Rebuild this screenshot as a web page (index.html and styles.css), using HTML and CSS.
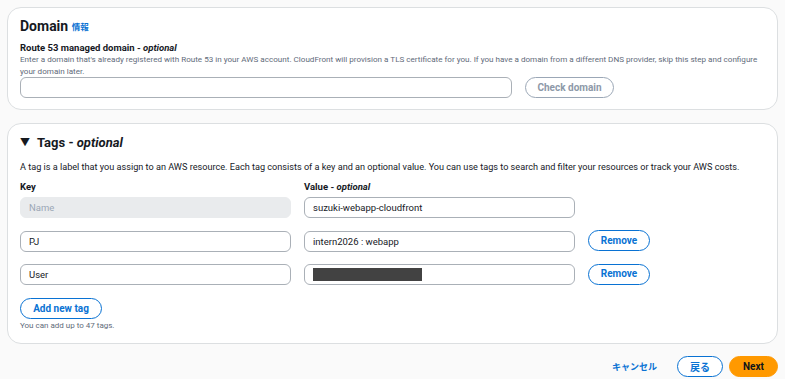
FILE: index.html
```html
<!DOCTYPE html>
<html>
<head>
<meta charset="utf-8">
<link rel="stylesheet" href="styles.css">
</head>
<body>
<div class="page">
  <section class="card domain">
    <h2 class="title">Domain <a class="info">情報</a></h2>
    <div class="label">Route 53 managed domain - <i>optional</i></div>
    <div class="desc">Enter a domain that's already registered with Route 53 in your AWS account. CloudFront will provision a TLS certificate for you. If you have a domain from a different DNS provider, skip this step and configure<br>your domain later.</div>
    <div class="domain-row">
      <div class="input wide"></div>
      <button class="btn disabled">Check domain</button>
    </div>
  </section>

  <section class="card tags">
    <h2 class="tags-title"><span class="caret">▼</span><span>Tags - <i>optional</i></span></h2>
    <div class="tags-desc">A tag is a label that you assign to an AWS resource. Each tag consists of a key and an optional value. You can use tags to search and filter your resources or track your AWS costs.</div>
    <div class="grid">
      <div class="col-label">Key</div>
      <div class="col-label">Value - <i>optional</i></div>
      <div></div>
      <div class="input key disabled-input">Name</div>
      <div class="input val">suzuki-webapp-cloudfront</div>
      <div></div>
      <div class="input key">PJ</div>
      <div class="input val">intern2026 : webapp</div>
      <button class="btn normal">Remove</button>
      <div class="input key">User</div>
      <div class="input val"><span class="redact"></span></div>
      <button class="btn normal">Remove</button>
    </div>
    <button class="btn normal add">Add new tag</button>
    <div class="note">You can add up to 47 tags.</div>
  </section>

  <footer class="footer">
    <a class="cancel">キャンセル</a>
    <button class="btn normal back">戻る</button>
    <button class="btn primary">Next</button>
  </footer>
</div>
</body>
</html>
```
FILE: styles.css
```css
* { box-sizing: border-box; }
html, body { margin: 0; padding: 0; }
body {
  background: #fafafa;
  font-family: Roboto, "Noto Sans CJK JP", sans-serif;
  color: #16191f;
  width: 785px;
  height: 379px;
  overflow: hidden;
}
.page { padding: 7px 7px 0 7px; }
.card {
  background: #fff;
  border: 1px solid #dcdfe1;
  border-radius: 14px;
  padding: 0 12px;
}
.domain { height: 103px; padding-top: 8px; }
.title {
  margin: 0;
  font-size: 14px;
  font-weight: 700;
  line-height: 20px;
  height: 20px;
}
.info {
  font-size: 8.5px;
  color: #0972d3;
  font-weight: 700;
  font-family: "Noto Sans CJK JP", sans-serif;
  vertical-align: 1px;
}
.label {
  margin-top: 6px;
  margin-bottom: -1px;
  font-size: 9.5px;
  font-weight: 700;
  line-height: 12px;
}
.desc {
  font-size: 8.1px;
  color: #5f6b7a;
  line-height: 12px;
  white-space: nowrap;
}
.domain-row {
  margin-top: 0;
  display: flex;
  align-items: center;
  gap: 13px;
}
.input {
  height: 21px;
  border: 1px solid #aab0b7;
  border-radius: 6px;
  font-size: 9.5px;
  line-height: 19px;
  padding: 0 8px;
  color: #16191f;
  background: #fff;
  white-space: nowrap;
}
.wide { width: 492px; }
.btn {
  font-family: Roboto, "Noto Sans CJK JP", sans-serif;
  height: 21px;
  border-radius: 11px;
  font-size: 10px;
  font-weight: 700;
  background: #fff;
  padding: 0;
  line-height: 18px;
  white-space: nowrap;
}
.disabled {
  border: 1px solid #9ba7b6;
  color: #8d99a8;
  width: 89px;
}
.normal {
  border: 1.5px solid #0972d3;
  color: #0972d3;
}
.tags { margin-top: 13px; height: 221px; padding-top: 10px; }
.tags-title {
  margin: 0;
  font-size: 13px;
  font-weight: 700;
  line-height: 18px;
  display: flex;
  align-items: center;
}
.caret { font-size: 10px; margin-right: 7px; }
.tags-desc {
  margin-top: 9px;
  font-size: 9.15px;
  line-height: 12px;
  color: #16191f;
}
.grid {
  margin-top: 8px;
  display: grid;
  grid-template-columns: 271px 271px 62px;
  column-gap: 13px;
  row-gap: 12px;
  align-items: center;
}
.col-label {
  font-size: 9.5px;
  font-weight: 700;
  line-height: 12px;
  margin-bottom: -8px;
}
.grid .input:nth-child(n+7) { margin-top: 0.5px; }
.disabled-input {
  background: #e9ebed;
  border-color: #e9ebed;
  color: #9ba7b6;
}
.val { display: flex; align-items: center; }
.redact {
  display: block;
  width: 109px;
  height: 13px;
  background: #424242;
}
.btn.normal.add { margin-top: 13px; width: 82px; }
.grid .btn { width: 62px; }
.note {
  font-size: 8px;
  color: #5f6b7a;
  margin-top: 1px;
  line-height: 12px;
}
.footer {
  display: flex;
  justify-content: flex-end;
  align-items: center;
  margin-top: 12px;
  gap: 6px;
}
.cancel {
  color: #0972d3;
  font-weight: 700;
  font-size: 9px;
  font-family: "Noto Sans CJK JP", sans-serif;
  margin-right: 14px;
}
.back { width: 46px; font-family: "Noto Sans CJK JP", sans-serif; }
.primary {
  background: #ff9900;
  border: 1px solid #ff9900;
  color: #0f141a;
  width: 49px;
}
```
